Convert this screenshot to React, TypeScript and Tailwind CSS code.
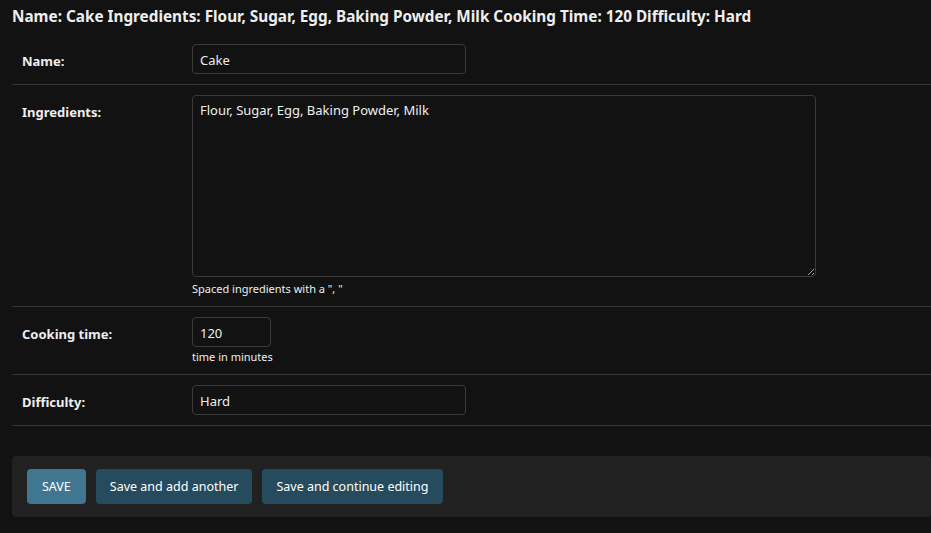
import { useState } from "react";

const font = { fontFamily: '"Noto Sans", "Open Sans", sans-serif' };

function Row(props: { label: string, children: React.ReactNode }) {
	return <div className="flex border-b border-[#353535] px-[10px] py-[10px]">
		<label className="w-[170px] shrink-0 pt-[8px] text-[13px] font-bold text-[#eeeeee]">{props.label}</label>
		<div className="flex flex-col">{props.children}</div>
	</div>
}

export default function App() {
	const [name, setName] = useState("Cake");
	const [ingredients, setIngredients] = useState("Flour, Sugar, Egg, Baking Powder, Milk");
	const [time, setTime] = useState("120");
	const [difficulty, setDifficulty] = useState("Hard");

	const input = "h-[30px] rounded-[4px] border border-[#3a3a3a] bg-[#121212] px-[7px] pt-[2px] text-[13px] text-[#eeeeee] outline-none";
	const button = "h-[35px] rounded-[4px] pt-[2px] text-[12.5px] text-white";

	return <div className="min-h-[533px] bg-[#121212] text-[#eeeeee]" style={font}>
		<h2 className="px-[12px] pt-[5px] pb-[7px] text-[15.3px] font-bold leading-[22px]">
			Name: Cake Ingredients: Flour, Sugar, Egg, Baking Powder, Milk Cooking Time: 120 Difficulty: Hard
		</h2>
		<div className="ml-[12px]">
			<Row label="Name:">
				<input className={input + " w-[274px]"} value={name} onChange={e => setName(e.target.value)} />
			</Row>
			<Row label="Ingredients:">
				<textarea className="h-[182px] w-[624px] rounded-[4px] border border-[#3a3a3a] bg-[#121212] px-[7px] py-[5px] text-[13px] text-[#eeeeee] outline-none" value={ingredients} onChange={e => setIngredients(e.target.value)} />
				<div className="pt-[4px] text-[11px] leading-[15px] text-[#eeeeee]">Spaced ingredients with a ", "</div>
			</Row>
			<Row label="Cooking time:">
				<input className={input + " w-[79px]"} value={time} onChange={e => setTime(e.target.value)} />
				<div className="pt-[2px] text-[11px] leading-[15px] text-[#eeeeee]">time in minutes</div>
			</Row>
			<Row label="Difficulty:">
				<input className={input + " w-[274px]"} value={difficulty} onChange={e => setDifficulty(e.target.value)} />
			</Row>
			<div className="mt-[30px] flex gap-[10px] rounded-[4px] bg-[#212121] px-[15px] py-[13px]">
				<button className={button + " bg-[#417690] px-[15px]"}>SAVE</button>
				<button className={button + " bg-[#264b5d] px-[14px]"}>Save and add another</button>
				<button className={button + " bg-[#264b5d] px-[14px]"}>Save and continue editing</button>
			</div>
		</div>
	</div>
}
